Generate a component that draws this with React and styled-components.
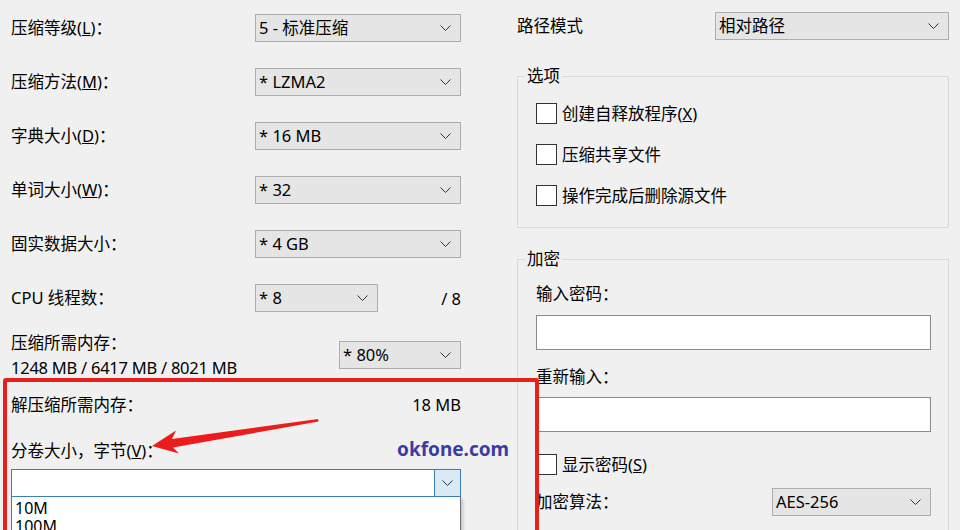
import React from 'react';
import styled, { createGlobalStyle } from 'styled-components';

const GlobalStyle = createGlobalStyle`
  html, body {
    margin: 0;
    padding: 0;
    background: #f0f0f0;
  }
  body {
    font-family: "Noto Sans", "Noto Sans CJK SC", sans-serif;
    font-size: 16.5px;
    color: #000;
  }
  #root {
    width: 960px;
    height: 530px;
    overflow: hidden;
  }
`;

// Small down chevron used in every combo box
const Chevron = () => (
  <svg width="11" height="6" viewBox="0 0 11 6">
    <polyline points="0.5,0.5 5.5,5.5 10.5,0.5" fill="none" stroke="#333" strokeWidth="1" />
  </svg>
);

const ComboBox = ({ value, width }) => (
  <Combo $w={width}>
    <ComboText>{value}</ComboText>
    <Chevron />
  </Combo>
);

const Check = ({ children }) => (
  <CheckRow>
    <CheckBox />
    <span>{children}</span>
  </CheckRow>
);

export default function App() {
  return (
    <Page>
      <GlobalStyle />
      <LeftCol>
        <FieldRow>
          <Label>压缩等级(<u>L</u>)：</Label>
          <ComboBox value="5 - 标准压缩" />
        </FieldRow>
        <FieldRow>
          <Label>压缩方法(<u>M</u>)：</Label>
          <ComboBox value="* LZMA2" />
        </FieldRow>
        <FieldRow>
          <Label>字典大小(<u>D</u>)：</Label>
          <ComboBox value="* 16 MB" />
        </FieldRow>
        <FieldRow>
          <Label>单词大小(<u>W</u>)：</Label>
          <ComboBox value="* 32" />
        </FieldRow>
        <FieldRow>
          <Label>固实数据大小：</Label>
          <ComboBox value="* 4 GB" />
        </FieldRow>
        <FieldRow $last>
          <Label>CPU 线程数：</Label>
          <SplitCell>
            <ComboBox value="* 8" width={123} />
            <span>/ 8</span>
          </SplitCell>
        </FieldRow>
        <MemoryRow>
          <TwoLine>
            <div>压缩所需内存：</div>
            <MemoryFigures>1248 MB / 6417 MB / 8021 MB</MemoryFigures>
          </TwoLine>
          <ComboBox value="* 80%" width={122} />
        </MemoryRow>
        <InfoRow>
          <span>解压缩所需内存：</span>
          <span>18 MB</span>
        </InfoRow>
        <VolumeLabel>分卷大小，字节(<u>V</u>)：</VolumeLabel>
        <OpenCombo>
          <OpenComboField />
          <OpenComboButton>
            <Chevron />
          </OpenComboButton>
        </OpenCombo>
        <DropList>
          <DropItem>10M</DropItem>
          <DropItem>100M</DropItem>
        </DropList>
      </LeftCol>

      <RightCol>
        <PathRow>
          <Label>路径模式</Label>
          <ComboBox value="相对路径" />
        </PathRow>

        <Group $mt={27} $pt={18} $pb={22}>
          <Legend>选项</Legend>
          <CheckList>
            <Check>创建自释放程序(<u>X</u>)</Check>
            <Check>压缩共享文件</Check>
            <Check>操作完成后删除源文件</Check>
          </CheckList>
        </Group>

        <Group $mt={22} $pt={15} $pb={30}>
          <Legend>加密</Legend>
          <FormLabel>输入密码：</FormLabel>
          <TextInput $mt={10} />
          <FormLabel $mt={16}>重新输入：</FormLabel>
          <TextInput $mt={9} />
          <CheckWrap>
            <Check>显示密码(<u>S</u>)</Check>
          </CheckWrap>
          <AlgoRow>
            <Label>加密算法：</Label>
            <ComboBox value="AES-256" />
          </AlgoRow>
        </Group>
      </RightCol>

      <Overlay>
        <RedFrame />
        <Watermark>okfone.com</Watermark>
        <ArrowSvg width="960" height="530" viewBox="0 0 960 530">
          <polygon
            points="152,446 176,430.5 172,439 318,419 318.5,421.5 173,447.5 179,453.5"
            fill="#ec1c1c"
          />
        </ArrowSvg>
      </Overlay>
    </Page>
  );
}

// Styled components
const Page = styled.div`
  position: relative;
  display: flex;
  flex-direction: row;
  align-items: flex-start;
  width: 960px;
  height: 530px;
  box-sizing: border-box;
  padding: 12px 0 0 11px;
  overflow: hidden;
`;
const LeftCol = styled.div`
  display: flex;
  flex-direction: column;
  width: 450px;
  padding-top: 2px;
`;
const RightCol = styled.div`
  display: flex;
  flex-direction: column;
  width: 432px;
  margin-left: 56px;
`;
const Label = styled.span`
  white-space: nowrap;
  line-height: 22px;
`;
const FieldRow = styled.div`
  display: grid;
  grid-template-columns: 244px 1fr;
  align-items: center;
  height: 28px;
  margin-bottom: ${p => (p.$last ? 18 : 26)}px;
`;
const SplitCell = styled.div`
  display: flex;
  align-items: center;
  justify-content: space-between;
`;
const Combo = styled.div`
  display: flex;
  align-items: center;
  justify-content: space-between;
  box-sizing: border-box;
  width: ${p => (p.$w ? `${p.$w}px` : '100%')};
  height: 28px;
  padding: 0 9px 0 3px;
  background: #e5e5e5;
  border: 1px solid #adadad;
`;
const ComboText = styled.span`
  white-space: pre;
  line-height: 22px;
`;
const MemoryRow = styled.div`
  display: flex;
  align-items: center;
  justify-content: space-between;
`;
const TwoLine = styled.div`
  line-height: 25px;
  white-space: nowrap;
`;
const MemoryFigures = styled.div`
  letter-spacing: -0.25px;
`;
const InfoRow = styled.div`
  display: flex;
  justify-content: space-between;
  line-height: 25px;
  margin-top: 12px;
`;
const VolumeLabel = styled.div`
  line-height: 25px;
  margin-top: 21px;
`;
const OpenCombo = styled.div`
  display: flex;
  box-sizing: border-box;
  height: 28px;
  margin-top: 6px;
  background: #fff;
  border: 1px solid #3d7fb5;
`;
const OpenComboField = styled.div`
  flex: 1;
`;
const OpenComboButton = styled.div`
  display: flex;
  align-items: center;
  justify-content: center;
  width: 25px;
  background: #dbe9f6;
  border-left: 1px solid #3d7fb5;
`;
const DropList = styled.div`
  background: #fff;
  border: 1px solid #6a6f78;
  border-top: none;
  padding-top: 2px;
  height: 60px;
  box-shadow: 2px 2px 3px rgba(0, 0, 0, 0.18);
`;
const DropItem = styled.div`
  padding-left: 3px;
  line-height: 18px;
  font-size: 16px;
`;
const PathRow = styled.div`
  display: grid;
  grid-template-columns: 198px 1fr;
  align-items: center;
  height: 28px;
`;
const Group = styled.fieldset`
  margin: ${p => p.$mt}px 0 0;
  padding: ${p => p.$pt}px 17px ${p => p.$pb}px 18px;
  border: 1px solid #dadada;
  min-width: 0;
`;
const Legend = styled.legend`
  margin-left: -11px;
  padding: 0 2px;
  line-height: 18px;
`;
const CheckList = styled.div`
  display: flex;
  flex-direction: column;
  gap: 21px;
`;
const CheckRow = styled.div`
  display: flex;
  align-items: center;
  gap: 5px;
  height: 20px;
  white-space: nowrap;
`;
const CheckBox = styled.span`
  box-sizing: border-box;
  width: 21px;
  height: 21px;
  background: #fff;
  border: 1px solid #333;
`;
const FormLabel = styled.div`
  line-height: 22px;
  margin-top: ${p => p.$mt || 0}px;
`;
const TextInput = styled.div`
  box-sizing: border-box;
  height: 35px;
  margin-top: ${p => p.$mt}px;
  background: #fff;
  border: 1px solid #8a8a8a;
`;
const CheckWrap = styled.div`
  margin-top: 22px;
`;
const AlgoRow = styled.div`
  display: grid;
  grid-template-columns: 236px 1fr;
  align-items: center;
  height: 29px;
  margin-top: 13px;
`;
const Overlay = styled.div`
  position: absolute;
  inset: 0;
  pointer-events: none;
`;
const RedFrame = styled.div`
  position: absolute;
  left: 3px;
  top: 378px;
  width: 536px;
  height: 220px;
  box-sizing: border-box;
  border: 4px solid #e6201a;
  border-radius: 3px;
`;
const Watermark = styled.div`
  position: absolute;
  left: 397px;
  top: 436px;
  font-family: "Noto Sans", "Open Sans", sans-serif;
  font-weight: 700;
  font-size: 19px;
  line-height: 26px;
  color: #3b3ba6;
`;
const ArrowSvg = styled.svg`
  position: absolute;
  left: 0;
  top: 0;
`;
